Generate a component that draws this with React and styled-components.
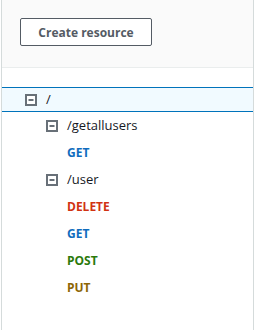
import React from "react";
import styled, { createGlobalStyle } from "styled-components";

const GlobalStyle = createGlobalStyle`
  body {
    margin: 0;
    background: #ffffff;
    font-family: "Open Sans", "Noto Sans", Arial, sans-serif;
  }
`;

const Panel = styled.div`
  margin: 0 1px;
  height: 330px;
  border-left: 1px solid #d5dbdb;
  border-right: 1px solid #d5dbdb;
  box-sizing: border-box;
  display: flex;
  flex-direction: column;
`;

const Header = styled.div`
  height: 68px;
  box-sizing: border-box;
  padding: 18px 0 0 18px;
  background: #fafafa;
  border-bottom: 1px solid #eaeded;
`;

const Button = styled.button`
  width: 132px;
  height: 28px;
  padding: 0;
  background: #ffffff;
  border: 1px solid #545b64;
  border-radius: 2px;
  color: #545b64;
  font-family: inherit;
  font-size: 12px;
  font-weight: 700;
  cursor: pointer;
`;

const Tree = styled.div`
  display: flex;
  flex-direction: column;
  padding-top: 19px;
`;

const Row = styled.div`
  display: flex;
  align-items: center;
  gap: 9px;
  height: ${({ $selected }) => ($selected ? "25px" : "27px")};
  box-sizing: border-box;
  padding-left: ${({ $level }) => 23 + $level * 21}px;
  background: ${({ $selected }) => ($selected ? "#f1faff" : "transparent")};
  border-top: ${({ $selected }) => ($selected ? "1px solid #0073bb" : "none")};
  border-bottom: ${({ $selected }) => ($selected ? "1px solid #0073bb" : "none")};
`;

const Path = styled.span`
  font-size: 13px;
  color: #16191f;
  margin-bottom: 2px;
`;

const methodColors = {
  GET: "#0f6cbd",
  DELETE: "#d13212",
  POST: "#2b7a0b",
  PUT: "#8d6605",
};

const Method = styled.span`
  font-size: 12px;
  font-weight: 700;
  color: ${({ $method }) => methodColors[$method]};
  margin-bottom: 1px;
`;

const Collapse = () => (
  <svg width="12" height="12" viewBox="0 0 12 12">
    <rect x="1" y="1" width="10" height="10" fill="#fff" stroke="#687078" strokeWidth="2" />
    <line x1="3.5" y1="6" x2="8.5" y2="6" stroke="#687078" strokeWidth="2" />
  </svg>
);

const items = [
  { path: "/", level: 0, selected: true },
  { path: "/getallusers", level: 1 },
  { method: "GET", level: 2 },
  { path: "/user", level: 1 },
  { method: "DELETE", level: 2 },
  { method: "GET", level: 2 },
  { method: "POST", level: 2 },
  { method: "PUT", level: 2 },
];

export default function App() {
  return (
    <>
      <GlobalStyle />
      <Panel>
        <Header>
          <Button>Create resource</Button>
        </Header>
        <Tree>
          {items.map((item, i) => (
            <Row key={i} $level={item.level} $selected={item.selected}>
              {item.path ? (
                <>
                  <Collapse />
                  <Path>{item.path}</Path>
                </>
              ) : (
                <Method $method={item.method}>{item.method}</Method>
              )}
            </Row>
          ))}
        </Tree>
      </Panel>
    </>
  );
}
